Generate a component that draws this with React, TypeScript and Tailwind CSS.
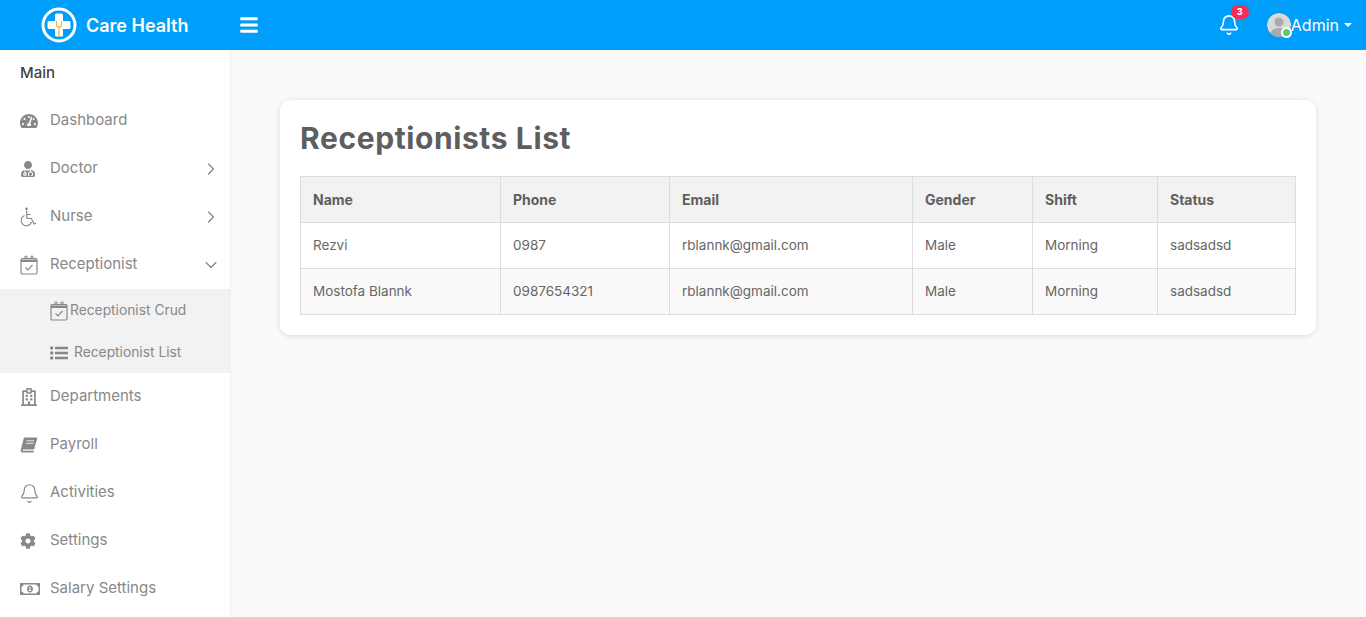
import { FaBars, FaCog, FaRegHospital, FaRegMoneyBillAlt, FaTachometerAlt, FaUserMd } from "react-icons/fa";
import { Bell, ChevronDown, ChevronRight } from "lucide-react";
import type { ReactNode } from "react";

const rows = [
  ["Rezvi", "0987", "rblannk@gmail.com", "Male", "Morning", "sadsadsd"],
  ["Mostofa Blannk", "0987654321", "rblannk@gmail.com", "Male", "Morning", "sadsadsd"],
];

const heads = [
  { label: "Name", width: "w-[200px]" },
  { label: "Phone", width: "w-[169px]" },
  { label: "Email", width: "w-[243px]" },
  { label: "Gender", width: "w-[120px]" },
  { label: "Shift", width: "w-[125px]" },
  { label: "Status", width: "w-[138px]" },
];

const Logo = () => (
  <svg width="36" height="36" viewBox="0 0 36 36">
    <circle cx="18" cy="18" r="16" fill="none" stroke="#fff" strokeWidth="3" />
    <path d="M14 8a1.500 1.500 0 0 1 1.500-1.500h5A1.500 1.500 0 0 1 22 8v6h6a1.500 1.500 0 0 1 1.500 1.500v5A1.500 1.500 0 0 1 28 22h-6v6a1.500 1.500 0 0 1-1.500 1.500h-5A1.500 1.500 0 0 1 14 28v-6H8a1.500 1.500 0 0 1-1.500-1.500v-5A1.500 1.500 0 0 1 8 14h6z" fill="#fff" />
    <path d="M15.500 14v3.500a2.500 2.500 0 0 0 5 0V14M18 20v10" fill="none" stroke="#f5b335" strokeWidth="1.200" />
  </svg>
);

const Avatar = () => (
  <svg width="24" height="24" viewBox="0 0 24 24" className="rounded-full">
    <circle cx="12" cy="12" r="12" fill="#d9d9d9" />
    <circle cx="12" cy="9" r="4.500" fill="#a9a9a9" />
    <path d="M3.500 20.500c1-4 4.500-5.500 8.500-5.500s7.500 1.500 8.500 5.500A12 12 0 0 1 12 24a12 12 0 0 1-8.500-3.500z" fill="#a9a9a9" />
  </svg>
);

const CalendarIcon = () => (
  <svg width="18" height="20" viewBox="0 0 18 20" fill="none" stroke="currentColor">
    <rect x="1" y="3.500" width="16" height="15.500" rx="1.200" strokeWidth="1.200" />
    <path d="M1 4.500h16v2.500H1z" fill="currentColor" strokeWidth="0" />
    <path d="M5 4V2a1 1 0 0 1 2 0v2M11 4V2a1 1 0 0 1 2 0v2" strokeWidth="1.100" />
    <path d="M5.500 12.500l2.500 2.500 4.500-5" strokeWidth="1.200" />
  </svg>
);

const WheelchairIcon = () => (
  <svg width="17" height="20" viewBox="0 0 17 20" fill="none" stroke="currentColor" strokeWidth="1.200">
    <circle cx="6.500" cy="1.800" r="1.300" fill="currentColor" strokeWidth="0" />
    <path d="M6.500 3.500l.5 8h4.500l2.500 5.500 2-.8M6.800 7.500h4" />
    <path d="M4.500 8.500a5.300 5.300 0 1 0 7 6.500" />
  </svg>
);

const BookIcon = () => (
  <svg width="18" height="16" viewBox="0 0 18 16" fill="currentColor">
    <path d="M4 .500h13.500L14 12.500H3.500c-1 0-1.200 1-.3 1.200H14l-.5 1.800H2.500C1 15.500.300 14 .800 12.500z" />
    <path d="M6.500 3.800h7.500M6 6.300h7.500" stroke="#fff" strokeWidth="0.800" />
  </svg>
);

const ListIcon = () => (
  <svg width="18" height="14" viewBox="0 0 18 14" fill="currentColor">
    <circle cx="1.700" cy="2" r="1.700" />
    <circle cx="1.700" cy="7" r="1.700" />
    <circle cx="1.700" cy="12" r="1.700" />
    <rect x="5" y="0.700" width="13" height="2.600" rx="0.400" />
    <rect x="5" y="5.700" width="13" height="2.600" rx="0.400" />
    <rect x="5" y="10.700" width="13" height="2.600" rx="0.400" />
  </svg>
);

const NavItem = ({ icon, label, arrow }: { icon: ReactNode; label: string; arrow?: ReactNode }) => (
  <div className="flex h-12 items-center pl-5 pr-[9px] text-[#888]">
    <span className="flex w-[30px] shrink-0 items-center text-[17px]">{icon}</span>
    <span className="flex-1 pb-[1px] text-[15px]">{label}</span>
    {arrow}
  </div>
);

const App = () => {
  return (
    <div className="flex h-screen flex-col overflow-hidden bg-[#fafafa] font-['Inter','Liberation_Sans',sans-serif] text-[#5e5e5e]">
      {/* Header */}
      <header className="flex h-[50px] shrink-0 items-center bg-[#009efb] text-white">
        <div className="flex w-[239px] items-center pl-[41px]">
          <Logo />
          <span className="ml-[9px] text-[18px] font-semibold">Care Health</span>
        </div>
        <FaBars className="text-[20px]" />
        <div className="ml-auto flex items-center pr-[14px]">
          <div className="relative mr-[27px]">
            <Bell size={22} strokeWidth={1.8} />
            <span className="absolute -top-[9px] left-[13px] flex h-[14px] w-[18px] items-center justify-center rounded-full bg-[#f62d51] text-[9px] font-extrabold">
              3
            </span>
          </div>
          <div className="relative">
            <Avatar />
            <span className="absolute -bottom-[1px] -right-[1px] h-[11px] w-[11px] rounded-full border-2 border-white bg-[#55ce63]" />
          </div>
          <span className="text-[16px]">Admin</span>
          <span className="ml-[5px] h-0 w-0 border-x-[4px] border-t-[4px] border-x-transparent border-t-white" />
        </div>
      </header>

      <div className="flex min-h-0 flex-1">
        {/* Sidebar */}
        <aside className="w-[231px] shrink-0 overflow-hidden border-r border-[#eeeeee] bg-white">
          <div className="flex h-[47px] items-center pl-5 text-[15px] font-medium text-[#444]">Main</div>
          <NavItem icon={<FaTachometerAlt className="text-[18px]" />} label="Dashboard" />
          <NavItem
            icon={<FaUserMd className="text-[16px]" />}
            label="Doctor"
            arrow={<ChevronRight size={20} strokeWidth={1.5} />}
          />
          <NavItem
            icon={<WheelchairIcon />}
            label="Nurse"
            arrow={<ChevronRight size={20} strokeWidth={1.5} />}
          />
          <NavItem
            icon={<CalendarIcon />}
            label="Receptionist"
            arrow={<ChevronDown size={20} strokeWidth={1.5} />}
          />
          <div className="bg-[#f2f2f2] pl-[50px] text-[13.800px] text-[#888]">
            <div className="flex h-[42px] items-center pt-[1px]">
              <span className="mr-[2px]">
                <CalendarIcon />
              </span>
              Receptionist Crud
            </div>
            <div className="flex h-[42px] items-center pt-[1px]">
              <span className="mr-[6px]">
                <ListIcon />
              </span>
              Receptionist List
            </div>
          </div>
          <NavItem icon={<FaRegHospital className="text-[18px]" />} label="Departments" />
          <NavItem icon={<BookIcon />} label="Payroll" />
          <NavItem icon={<Bell size={21} strokeWidth={1.4} className="-ml-[1px]" />} label="Activities" />
          <NavItem icon={<FaCog className="text-[16px]" />} label="Settings" />
          <NavItem icon={<FaRegMoneyBillAlt className="text-[20px]" />} label="Salary Settings" />
        </aside>

        {/* Content */}
        <main className="min-w-0 flex-1 pl-[49px] pr-[50px] pt-[50px]">
          <div className="rounded-[10px] bg-white p-5 shadow-[0_1px_6px_rgba(0,0,0,0.12)]">
            <h1 className="mb-5 text-[30px] leading-9 font-bold tracking-[0.6px]">Receptionists List</h1>
            <table className="w-[995px] table-fixed border-collapse text-[14px]">
              <thead>
                <tr className="h-[46px] bg-[#f2f2f2]">
                  {heads.map((h) => (
                    <th key={h.label} className={`${h.width} border border-[#dddddd] px-3 pb-[1px] text-left font-bold`}>
                      {h.label}
                    </th>
                  ))}
                </tr>
              </thead>
              <tbody>
                {rows.map((row, i) => (
                  <tr key={i} className={`h-[46px] ${i % 2 ? "bg-[#f9f9f9]" : "bg-white"}`}>
                    {row.map((cell, j) => (
                      <td key={j} className="border border-[#dddddd] px-3 text-[13.500px] text-[#666]">
                        {cell}
                      </td>
                    ))}
                  </tr>
                ))}
              </tbody>
            </table>
          </div>
        </main>
      </div>
    </div>
  );
};

export default App;
